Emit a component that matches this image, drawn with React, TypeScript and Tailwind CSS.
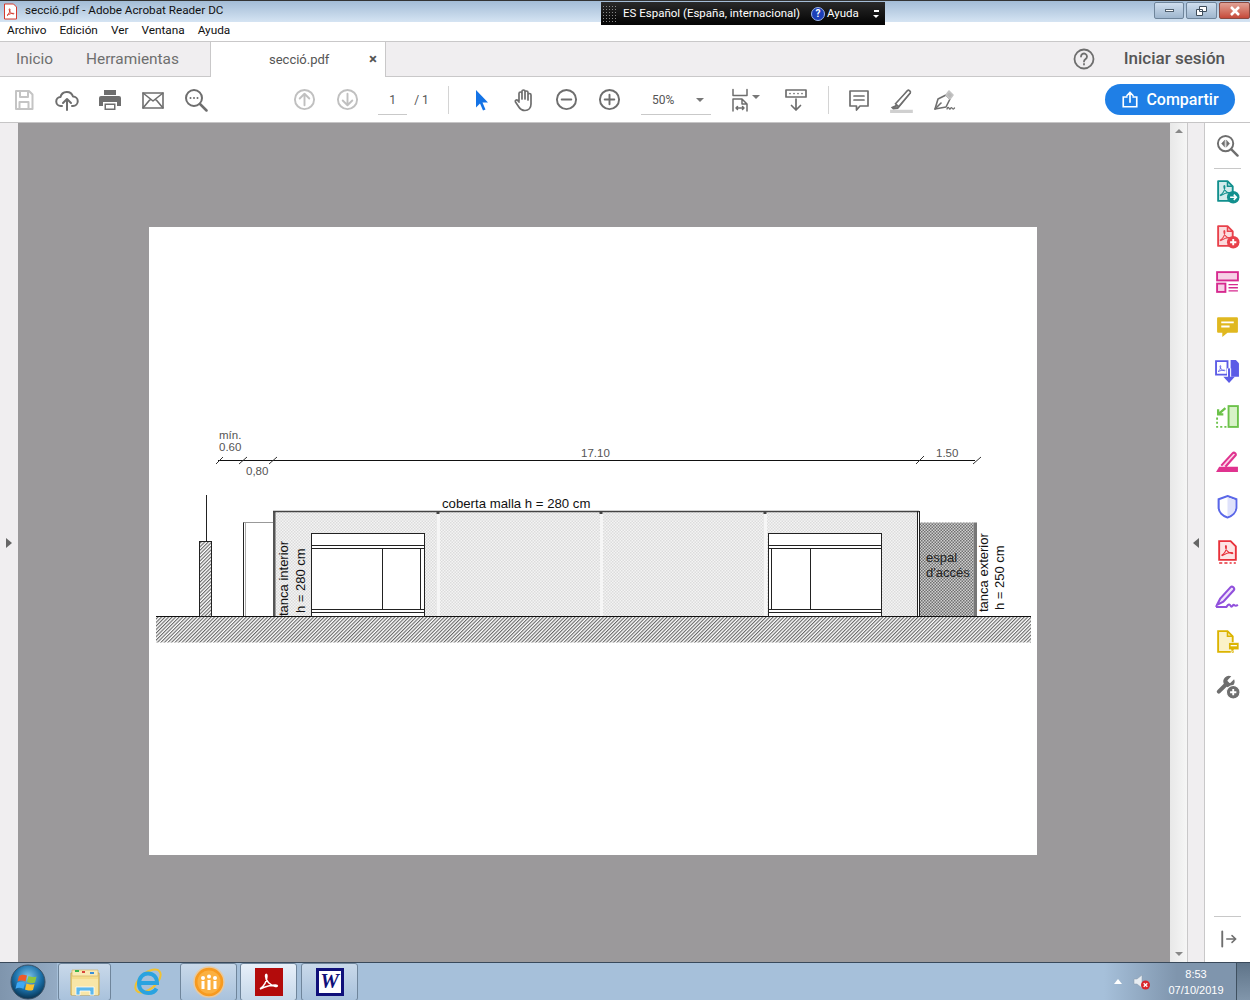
import React from 'react';

const Slot = ({ children, w = 'w-[43px]' }: { children: React.ReactNode; w?: string }) => (
  <div className={`${w} h-[44px] flex items-center justify-center shrink-0`}>{children}</div>
);

const Ico = ({ children, stroke = '#6e6e6e', size = 24, sw = 2 }: { children: React.ReactNode; stroke?: string; size?: number; sw?: number }) => (
  <svg width={size} height={size} viewBox="0 0 24 24" fill="none" stroke={stroke} strokeWidth={sw} strokeLinecap="round" strokeLinejoin="round">
    {children}
  </svg>
);

const Swirl = ({ color }: { color: string }) => (
  <path d="M5 15.500c2.500-1.500 4.500-5 4.500-8 0-1.500-1-1.500-1 0 0 3 3 6 6 6.500 1.500.2 1.500-1 0-1-3 0-6 1-9 3z" fill="none" stroke={color} strokeWidth="1" />
);

const ArrowCircle = ({ stroke, up }: { stroke: string; up: boolean }) => (
  <Ico stroke={stroke} size={23}>
    <circle cx="12" cy="12" r="10" />
    {up ? <path d="M12 18V6.500M7 11l5-5 5 5" /> : <path d="M12 6v11.500M7 13l5 5 5-5" />}
  </Ico>
);

const ZoomCircle = ({ minus }: { minus?: boolean }) => (
  <Ico sw={2} size={23}>
    <circle cx="12" cy="12" r="10" />
    <path d="M7 12h10" />
    {!minus && <path d="M12 7v10" />}
  </Ico>
);

function ToolBar() {
  return (
    <div className="h-[46px] flex items-center pl-[2px] bg-white border-b border-[#c6c5c6] shrink-0">
      <Slot>
        <Ico stroke="#c4c4c4">
          <path d="M4 3h13l3.500 3.500V21H4z" />
          <path d="M8 3v6h8V3M7.500 21v-7h9v7" />
        </Ico>
      </Slot>
      <Slot>
        <Ico>
          <path d="M7 18H6a4.500 4.500 0 0 1-.5-9A6.500 6.500 0 0 1 18 8.500a4.500 4.500 0 0 1 0 9.500h-1" />
          <path d="M12 22V11M8 15l4-4 4 4" />
        </Ico>
      </Slot>
      <Slot>
        <svg width="24" height="24" viewBox="0 0 24 24" fill="#6e6e6e">
          <path d="M6 2h12v5H6z" />
          <path d="M3 8h18a2 2 0 0 1 2 2v8h-4v-4H5v4H1v-8a2 2 0 0 1 2-2z" />
          <path d="M6.500 15.500h11V22h-11zM8 17v3.500h8V17z" fillRule="evenodd" />
        </svg>
      </Slot>
      <Slot>
        <Ico sw={1.6}>
          <rect x="2" y="5" width="20" height="15" />
          <path d="M2 5l10 8 10-8M2 20l7.500-9M22 20l-7.500-9" />
        </Ico>
      </Slot>
      <Slot>
        <Ico>
          <circle cx="10" cy="10" r="8" />
          <path d="M16 16l6.500 6.500" strokeWidth="2.500" />
          <path d="M6.500 10h.01M10 10h.01M13.500 10h.01" />
        </Ico>
      </Slot>
      <div className="w-[66px] shrink-0" />
      <Slot>
        <ArrowCircle stroke="#c0c0c0" up />
      </Slot>
      <Slot>
        <ArrowCircle stroke="#c0c0c0" up={false} />
      </Slot>
      <div className="w-[29px] ml-[9px] h-[30px] pt-[2px] border-b border-[#c9c9c9] flex items-center justify-center text-[12px] text-[#555] shrink-0">1</div>
      <div className="w-[29px] text-[12px] text-[#555] text-center shrink-0 pt-[1px]">/ 1</div>
      <div className="w-[12px] shrink-0" />
      <div className="w-px h-[28px] bg-[#d4d4d4] shrink-0" />
      <div className="w-[10px] shrink-0" />
      <Slot>
        <svg width="24" height="24" viewBox="0 0 24 24" fill="#1473e6">
          <path d="M7 2l12 12.500h-5.500l3 7-2.500 1-3-7L7 19.500z" />
        </svg>
      </Slot>
      <Slot>
        <Ico sw={1.7}>
          <path d="M7 13V5.500a1.500 1.500 0 0 1 3 0V11M10 11V3.500a1.500 1.500 0 0 1 3 0V11M13 11V4.500a1.500 1.500 0 0 1 3 0V12M16 12V7a1.500 1.500 0 0 1 3 0v9c0 4-2.500 6.500-6 6.500s-5-1.500-6.500-4L3.500 14c-.8-1.500 1-2.800 2.200-1.600L7 14" />
        </Ico>
      </Slot>
      <Slot>
        <ZoomCircle minus />
      </Slot>
      <Slot>
        <ZoomCircle />
      </Slot>
      <div className="w-[10px] shrink-0" />
      <div className="w-[70px] h-[30px] pt-[2px] border-b border-[#c9c9c9] flex items-center pl-[11px] shrink-0">
        <span className="text-[12px] text-[#555] flex-1">50%</span>
        <span className="w-0 h-0 border-l-[4px] border-r-[4px] border-t-[4px] border-l-transparent border-r-transparent border-t-[#777] mr-[7px]" />
      </div>
      <div className="w-[18px] shrink-0" />
      <div className="w-[49px] h-[44px] flex items-center shrink-0">
        <Ico sw={1.5} size={24}>
          <path d="M4 1.500v6h14v-6M4 23V11h9l5 5v7M13 11v5h5M7 20h8M7 20l1.500-1.500M7 20l1.500 1.500M15 20l-1.500-1.500M15 20l-1.500 1.500" />
        </Ico>
        <span className="w-0 h-0 border-l-[4px] border-r-[4px] border-t-[4px] border-l-transparent border-r-transparent border-t-[#777] -ml-[1px] mb-[6px]" />
      </div>
      <Slot w="w-[36px]">
        <Ico sw={1.7}>
          <rect x="2" y="2" width="20" height="7" />
          <path d="M6 5.500h.01M10 5.500h.01M14 5.500h.01M18 5.500h.01M12 11v11M7.500 17.500L12 22l4.500-4.500" />
        </Ico>
      </Slot>
      <div className="w-[14px] shrink-0" />
      <div className="w-px h-[28px] bg-[#d4d4d4] shrink-0" />
      <div className="w-[8px] shrink-0" />
      <Slot>
        <Ico sw={1.7}>
          <path d="M3 3h18v15h-8l-3.500 4v-4H3z" />
          <path d="M7 8h10M7 12h10" />
        </Ico>
      </Slot>
      <Slot>
        <svg width="26" height="26" viewBox="0 0 24 24" fill="none">
          <path d="M1 21h21v3H1z" fill="#d0d0d0" />
          <path d="M3 19l3-1.500L17 3.500c1-1.300 3.500.7 2.500 2L8 19.500 4 20z" fill="#8a8a8a" stroke="#6e6e6e" strokeWidth="1.600" />
          <path d="M17 3.500c1-1.300 3.500.7 2.500 2L9 18l-3-2.500z" fill="#fff" stroke="#6e6e6e" strokeWidth="1.400" />
        </svg>
      </Slot>
      <Slot>
        <Ico sw={1.6}>
          <path d="M2 21l3-10 8-4 4 4-4 8z" />
          <path d="M2 21l6-6" />
          <path d="M13 7l3-4 4 4-3 4z" fill="#b8b8b8" stroke="#c4c4c4" />
          <path d="M14 21c1-3 2-1 2.500 0s1.500-2.500 2.500-1 1 1.500 2.500 0" strokeWidth="1.300" />
        </Ico>
      </Slot>
      <div className="w-[139px] shrink-0" />
      <button className="w-[130px] h-[31px] rounded-full bg-[#1f7fe6] text-white flex items-center justify-center gap-[7px] text-[16px] font-medium shrink-0">
        <svg width="18" height="18" viewBox="0 0 24 24" fill="none" stroke="#fff" strokeWidth="2.200" strokeLinecap="round">
          <path d="M8 8H3v13h18V8h-5M12 15V2M8 6l4-4 4 4" />
        </svg>
        Compartir
      </button>
    </div>
  );
}

// plano de la sección, coordenadas de la pantalla
function Drawing() {
  return (
    <svg width="888" height="628" viewBox="149 227 888 628" fontFamily="'Liberation Sans', Arial, sans-serif">
      <defs>
        <pattern id="hatch" width="2.500" height="2.500" patternUnits="userSpaceOnUse" patternTransform="rotate(-45)">
          <rect width="2.500" height="2.500" fill="#fff" />
          <rect width="2.500" height="1.100" fill="#666" />
        </pattern>
        <pattern id="mesh" width="3" height="3" patternUnits="userSpaceOnUse">
          <rect width="3" height="3" fill="#f4f4f4" />
          <rect width="1.500" height="1.500" fill="#dcdcdc" />
          <rect x="1.500" y="1.500" width="1.500" height="1.500" fill="#dcdcdc" />
        </pattern>
        <pattern id="meshDark" width="3" height="3" patternUnits="userSpaceOnUse">
          <rect width="3" height="3" fill="#cfcfcf" />
          <rect width="1.500" height="1.500" fill="#707070" />
          <rect x="1.500" y="1.500" width="1.500" height="1.500" fill="#707070" />
        </pattern>
      </defs>

      <g fill="#555" fontSize="11.500">
        <text x="219" y="439">mín.</text>
        <text x="219" y="451">0.60</text>
        <text x="246" y="475">0,80</text>
        <text x="581" y="457">17.10</text>
        <text x="936" y="457">1.50</text>
      </g>
      <g stroke="#111" strokeWidth="1">
        <path d="M218 460.500H975" />
        <path d="M216 464l7-7M239 464l8-7M269 464l8-7M916 464l8-8M973 464l8-7" stroke="#333" />
      </g>

      <rect x="156" y="617" width="875" height="25.500" fill="url(#hatch)" />
      <path d="M156 616.500H199M212 616.500H1031" stroke="#111" />

      <path d="M206.500 495v46" stroke="#222" />
      <rect x="199.500" y="541.500" width="12" height="75" fill="url(#hatch)" stroke="#222" />

      <path d="M243.500 616V522.500H273" fill="none" stroke="#999" />
      <path d="M243.500 522.500V616" stroke="#222" />
      <path d="M245.500 523V616" stroke="#aaa" />

      <rect x="275" y="512" width="642" height="104" fill="url(#mesh)" />
      <rect x="437" y="512" width="3" height="104" fill="#f6f6f6" />
      <rect x="600" y="512" width="3" height="104" fill="#f6f6f6" />
      <rect x="764" y="512" width="3" height="104" fill="#f6f6f6" />
      <rect x="273" y="511" width="2.500" height="105" fill="#555" />
      <path d="M273 511.500H919" stroke="#444" strokeWidth="1.500" />
      <path d="M436.500 512h3v2h-3zM599.500 512h3v2h-3zM763.500 512h3v2h-3z" fill="#444" />
      <path d="M917.500 511v105M919.500 511v105" stroke="#222" />

      <g fill="#fff" stroke="#222">
        <rect x="311.500" y="533.500" width="113" height="83" />
        <path d="M311.500 545.500H424.500M311.500 548.500H424.500M311.500 609.500H424.500M311.500 612.500H424.500M382.500 548.500V609.500M420.500 548.500V609.500" fill="none" />
        <rect x="768.500" y="533.500" width="113" height="83" />
        <path d="M768.500 545.500H881.500M768.500 548.500H881.500M768.500 609.500H881.500M768.500 612.500H881.500M771.500 548.500V609.500M810.500 548.500V609.500" fill="none" />
      </g>

      <rect x="920" y="522.500" width="54" height="93.500" fill="url(#meshDark)" />
      <rect x="974" y="522.500" width="3" height="93.500" fill="#777" />

      <g fill="#111" fontSize="13">
        <text x="442" y="508" fontSize="13.200">coberta malla h = 280 cm</text>
        <text transform="translate(288 616) rotate(-90)">tanca interior</text>
        <text transform="translate(305 613) rotate(-90)">h = 280 cm</text>
        <text transform="translate(988 612) rotate(-90)">tanca exterior</text>
        <text transform="translate(1004 610) rotate(-90)">h = 250 cm</text>
        <text x="926" y="562" fill="#222">espal</text>
        <text x="926" y="577" fill="#222">d'accés</text>
      </g>
    </svg>
  );
}

const PdfDoc = ({ color, fill }: { color: string; fill: string }) => (
  <>
    <path d="M3 2h9l5 5v14H3z" fill={fill} stroke={color} strokeWidth="1.800" strokeLinejoin="round" />
    <path d="M12 2v5h5" fill="none" stroke={color} strokeWidth="1.500" />
    <Swirl color={color} />
  </>
);

const railIcons: React.ReactNode[] = [
  <>
    <PdfDoc color="#12908e" fill="#d3ecec" />
    <circle cx="17.500" cy="17.500" r="6" fill="#12908e" />
    <path d="M14.500 17.500h6M18 15l2.500 2.500L18 20" stroke="#fff" strokeWidth="1.500" fill="none" />
  </>,
  <>
    <PdfDoc color="#e8414b" fill="#fbdcde" />
    <circle cx="17.500" cy="17.500" r="6" fill="#e8414b" />
    <path d="M14.500 17.500h6M17.500 14.500v6" stroke="#fff" strokeWidth="1.800" />
  </>,
  <>
    <rect x="2" y="3" width="20" height="8" fill="#f7d0e6" stroke="#d6298f" strokeWidth="1.800" />
    <rect x="2" y="14" width="8" height="8" fill="#f7d0e6" stroke="#d6298f" strokeWidth="1.800" />
    <path d="M13 15h9M13 18h9M13 21h9" stroke="#d6298f" strokeWidth="1.300" />
  </>,
  <>
    <path d="M3 3h18a1 1 0 0 1 1 1v13a1 1 0 0 1-1 1h-9l-5 4v-4H3a1 1 0 0 1-1-1V4a1 1 0 0 1 1-1z" fill="#e0b820" />
    <path d="M6 8h12M6 12h8" stroke="#fff" strokeWidth="1.800" />
  </>,
  <>
    <path d="M1 2h11v13H1z" fill="#fff" stroke="#5c5ce6" strokeWidth="1.800" />
    <path d="M15 1h5l3 3v13h-8z" fill="#5c5ce6" />
    <path d="M3 12c1.500-1 2.500-3 2.500-5 0-1-.7-1-.7 0 0 2 2 4 4 4.300 1 .1 1-.7 0-.7-2 0-4 .7-5.800 1.400z" fill="none" stroke="#5c5ce6" strokeWidth="0.800" />
    <path d="M13.500 9v9" stroke="#fff" strokeWidth="4" />
    <path d="M13.500 9v9" stroke="#5c5ce6" strokeWidth="2" />
    <path d="M8 17h11l-5.500 6z" fill="#5c5ce6" />
  </>,
  <>
    <rect x="13" y="2" width="9" height="20" fill="#d8f2c8" stroke="#6cc24a" strokeWidth="1.800" />
    <path d="M2 13v9h9" fill="none" stroke="#6cc24a" strokeWidth="1.800" strokeDasharray="2 2" />
    <path d="M10 4L3 10M3 5v5h5" fill="none" stroke="#6cc24a" strokeWidth="2.200" />
  </>,
  <>
    <path d="M1 22l3-5h18v5z" fill="#e0338f" />
    <path d="M6 16L17 4c1.500-1.500 4 .8 2.600 2.300L10 17" fill="#fbd5e8" stroke="#e0338f" strokeWidth="2" />
  </>,
  <>
    <path d="M12 2l8.500 3v8c0 4.500-4 8-8.500 9.500C7.500 21 3.500 17.500 3.500 13V5z" fill="#fff" stroke="#5a67e8" strokeWidth="2" />
    <path d="M12 3v18.500c4-1.500 7.500-4.500 7.500-8.500V6z" fill="#dfe2fb" />
  </>,
  <>
    <path d="M4 2h11l5 5v13H4z" fill="#fde4e4" stroke="#e8313a" strokeWidth="1.800" />
    <path d="M6.500 15.500c2.500-1.500 4.500-5 4.500-8 0-1.500-1-1.500-1 0 0 3 3 6 6 6.500 1.500.2 1.500-1 0-1-3 0-6 1-9 3z" fill="none" stroke="#e8313a" strokeWidth="1" />
    <path d="M4 23h3M9 23h3M14 23h2M18 23h2" stroke="#e8313a" strokeWidth="1.400" />
  </>,
  <>
    <path d="M2 20l3-6L15 3c1.500-1.500 4.500 1 3 3L8 17z" fill="#efe3fb" stroke="#9150dc" strokeWidth="2" />
    <path d="M1 22h10c2-3 3-3 4-1s2-1 3-1 1 2 4 0" fill="none" stroke="#9150dc" strokeWidth="2" />
  </>,
  <>
    <path d="M3 2h9l5 5v15H3z" fill="#fbf2c8" stroke="#dcb400" strokeWidth="1.800" />
    <path d="M12 2v5h5" fill="none" stroke="#dcb400" strokeWidth="1.500" />
    <path d="M13 13h10v7h-5l-2.500 3v-3H13z" fill="#dcb400" stroke="#fff" strokeWidth="0.600" />
    <path d="M15 16h6" stroke="#fff" strokeWidth="1.200" />
  </>,
  <>
    <g transform="translate(-1 0) scale(0.9)">
      <path d="M14.700 6.300a1 1 0 0 0 0 1.400l1.600 1.600a1 1 0 0 0 1.400 0l3.770-3.770a6 6 0 0 1-7.940 7.940l-6.910 6.910a2.120 2.120 0 0 1-3-3l6.910-6.910a6 6 0 0 1 7.940-7.940l-3.760 3.760z" fill="#6e6e6e" />
    </g>
    <circle cx="17.500" cy="17.500" r="6.500" fill="#6e6e6e" stroke="#fff" strokeWidth="1" />
    <path d="M14.500 17.500h6M17.500 14.500v6" stroke="#fff" strokeWidth="1.800" />
  </>,
];

function ToolRail() {
  return (
    <div className="w-[45px] bg-white flex flex-col items-center shrink-0">
      <div className="h-[45px] flex items-center justify-center">
        <Ico size={23} sw={2}>
          <circle cx="10" cy="10" r="8" />
          <path d="M16 16l6.500 6.500" strokeWidth="2.500" />
          <path d="M9 6.500L5.800 10 9 13.500zM11 6.500l3.200 3.500-3.200 3.500z" fill="#6e6e6e" strokeWidth="0.500" />
        </Ico>
      </div>
      <div className="w-[27px] h-px bg-[#c8c8c8]" />
      {railIcons.map((icon, i) => (
        <div key={i} className="h-[45px] flex items-center justify-center">
          <svg width="25" height="25" viewBox="0 0 24 24">{icon}</svg>
        </div>
      ))}
      <div className="mt-auto w-[27px] h-px bg-[#c8c8c8]" />
      <div className="h-[45px] flex items-center justify-center pl-[3px] pb-[1px]">
        <Ico size={18} sw={2}>
          <path d="M3 2v20" strokeWidth="2.500" />
          <path d="M9 12h12M16 7.500L21 12l-5 4.500" />
        </Ico>
      </div>
    </div>
  );
}

const TaskBtn = ({ children, w = 'w-[55px]', active }: { children: React.ReactNode; w?: string; active?: boolean }) => (
  <div className={`${w} h-[38px] rounded-[3px] border border-[#6f859b] flex items-center justify-center shrink-0 ${active ? 'bg-gradient-to-b from-[#e8f0f9] to-[#c6d8ea]' : 'bg-gradient-to-b from-[#c9d9ea] to-[#a9c2dc]'}`}>
    {children}
  </div>
);

function TaskBar() {
  return (
    <div className="h-[38px] flex items-center border-t border-[#39495a] bg-[#a6c0da] shrink-0 font-['Liberation_Sans',sans-serif]">
      <div className="w-[57px] h-full flex items-center justify-center pr-[2px] bg-gradient-to-r from-[#7f95ad] to-[#94abc4] shrink-0">
        <svg width="36" height="36" viewBox="0 0 36 36">
          <defs>
            <radialGradient id="orb" cx="50%" cy="35%" r="65%">
              <stop offset="0" stopColor="#7fc4ea" />
              <stop offset="0.6" stopColor="#1a6fa8" />
              <stop offset="1" stopColor="#08324f" />
            </radialGradient>
          </defs>
          <circle cx="18" cy="18" r="17" fill="url(#orb)" stroke="#3b5166" />
          <path d="M9 12c3-2 5-1.500 8-.5l-1.500 6c-3-1-5-1.500-8 0z" fill="#ee5a2a" />
          <path d="M18.500 12c3 1 5 1.500 8 .5l-1.500 6c-3 1-5 .5-8-.5z" fill="#8dc63f" />
          <path d="M7 18.800c3-1.500 5-1 8 0l-1.500 6c-3-1-5-1.500-8 0z" fill="#3fa9f5" />
          <path d="M16.500 19.500c3 1 5 1.500 8 .5l-1.500 6c-3 1-5 .5-8-.5z" fill="#fbc02d" />
        </svg>
      </div>
      <div className="w-px" />
      <TaskBtn w="w-[53px]">
        <svg width="32" height="30" viewBox="0 0 32 30">
          <path d="M2 6h28v22H2z" fill="#f5dc8c" stroke="#c9a850" />
          <path d="M3 3h26v6H3z" fill="#f9e9b4" stroke="#d4b565" strokeWidth="0.700" />
          <path d="M6 3h4v2H6z" fill="#3bb54a" />
          <path d="M13 4h3v2h-3z" fill="#d9453a" />
          <path d="M21 5h4v2h-4z" fill="#3a8fd9" />
          <path d="M3 12h26v16H3z" fill="#f8e6a8" />
          <path d="M7 28V20h18v8h-4v-4H11v4z" fill="#5cb8ec" stroke="#fff" strokeWidth="0.800" />
        </svg>
      </TaskBtn>
      <div className="w-[5px] shrink-0" />
      <div className="w-[64px] flex items-center justify-center shrink-0">
        <svg width="34" height="34" viewBox="0 0 34 34" fill="none">
          <ellipse cx="17" cy="16" rx="15" ry="8" transform="rotate(-40 17 16)" stroke="#f2c230" strokeWidth="2" />
          <path d="M8 18h18c0-6-4-9.500-9-9.500S8 12.500 8 18.500s4 9.500 9.500 9.500c4 0 6.500-1.500 8-4.500" stroke="#2aa3e0" strokeWidth="4" />
        </svg>
      </div>
      <TaskBtn w="w-[57px]">
        <svg width="32" height="32" viewBox="0 0 32 32">
          <circle cx="16" cy="16" r="15" fill="#f79a1f" stroke="#e7c9a0" strokeWidth="1.500" />
          <circle cx="16" cy="16" r="11.500" fill="#fbb040" />
          <circle cx="10" cy="12" r="2" fill="#fff" />
          <circle cx="16" cy="10.500" r="2" fill="#fff" />
          <circle cx="22" cy="12" r="2" fill="#fff" />
          <path d="M8.500 15h3v8h-3zM14.500 14h3v10h-3zM20.500 15h3v8h-3z" fill="#fff" />
        </svg>
      </TaskBtn>
      <div className="w-[3px] shrink-0" />
      <TaskBtn w="w-[57px]" active>
        <svg width="28" height="28" viewBox="0 0 28 28">
          <rect width="28" height="28" fill="#b30b0b" />
          <path d="M5 21c4-2.500 7-8 7-13 0-2.500-1.500-2.500-1.500 0 0 5 5 9.500 10 10.500 2.500.3 2.500-1.500 0-1.500-5 0-10 1.500-15.500 4z" fill="none" stroke="#fff" strokeWidth="1.500" />
        </svg>
      </TaskBtn>
      <div className="w-[4px] shrink-0" />
      <TaskBtn w="w-[57px]">
        <div className="w-[28px] h-[28px] border-[3px] border-[#10107a] bg-white flex items-center justify-center">
          <span className="text-[#10107a] text-[21px] font-bold italic font-['Liberation_Serif',serif] leading-none">W</span>
        </div>
      </TaskBtn>
      <div className="flex-1" />
      <div className="w-[146px] h-full bg-gradient-to-r from-[#a6c0da] via-[#7f95ad] to-[#7f95ad] flex items-center shrink-0">
        <div className="w-[12px] ml-[10px]">
          <span className="block w-0 h-0 border-l-[4px] border-r-[4px] border-b-[5px] border-l-transparent border-r-transparent border-b-white" />
        </div>
        <svg className="ml-[7px]" width="18" height="18" viewBox="0 0 18 18">
          <path d="M1 6h3l5-4v13l-5-4H1z" fill="#e8edf2" stroke="#8a9aaa" strokeWidth="0.500" />
          <circle cx="12.500" cy="12" r="4.500" fill="#d9262c" />
          <path d="M10.700 10.200l3.600 3.600M14.300 10.200l-3.600 3.600" stroke="#fff" strokeWidth="1.300" />
        </svg>
        <div className="flex flex-col items-center w-[60px] ml-[15px] text-[11px] leading-[16px] text-white">
          <span>8:53</span>
          <span>07/10/2019</span>
        </div>
        <div className="ml-auto w-[14px] h-full bg-gradient-to-b from-[#5f7489] to-[#8196ab] border-l border-[#3f5060]" />
      </div>
    </div>
  );
}

export default function App() {
  return (
    <div className="relative w-[1250px] h-[1000px] overflow-hidden flex flex-col bg-white font-['Roboto',sans-serif]">
      {/* barra de idioma, flota encima */}
      <div className="absolute left-[601px] top-[2px] w-[284px] h-[23px] bg-gradient-to-b from-[#2a2a2a] to-[#050505] text-white text-[11.500px] flex items-center z-10">
        <div className="w-[14px] h-[18px] ml-[1px] bg-[radial-gradient(#888_1px,transparent_1px)] bg-[length:3px_3px]" />
        <span className="ml-[7px]">ES Español (España, internacional)</span>
        <span className="ml-[11px] w-[14px] h-[14px] rounded-full bg-[#1c3fb8] border border-[#9db4e8] text-[10px] font-bold flex items-center justify-center">?</span>
        <span className="ml-[2px]">Ayuda</span>
        <div className="ml-auto mr-[6px] flex flex-col items-center gap-[3px]">
          <span className="block w-[5px] h-[2px] bg-white" />
          <span className="block w-0 h-0 border-l-[3px] border-r-[3px] border-t-[3px] border-l-transparent border-r-transparent border-t-white" />
        </div>
      </div>

      <div className="h-[22px] border-t border-[#333] bg-gradient-to-b from-[#a3bcd6] to-[#d5e4f3] flex items-center shrink-0">
        <svg className="ml-[4px]" width="13" height="17" viewBox="0 0 13 16">
          <path d="M.5.500h9l3 3v12H.500z" fill="#fff" stroke="#d43a2f" />
          <path d="M3 12c2-1.500 3-4 3-6 0-1-.8-1-.8 0 0 2 2 4 4 4.500 1 .1 1-.7 0-.7-2 0-4 .7-6.200 2.200z" fill="none" stroke="#d43a2f" />
        </svg>
        <span className="ml-[8px] text-[11.700px] text-[#111] mb-[1px]">secció.pdf - Adobe Acrobat Reader DC</span>
        <div className="ml-auto flex items-start self-start gap-[2px] pt-[1px]">
          <div className="w-[30px] h-[17px] rounded-[2px] border border-[#6f859b] bg-gradient-to-b from-[#cfdeee] to-[#9fb6ce] flex items-center justify-center">
            <span className="block w-[9px] h-[3px] bg-white border border-[#51606f]" />
          </div>
          <div className="w-[31px] h-[17px] rounded-[2px] border border-[#6f859b] bg-gradient-to-b from-[#cfdeee] to-[#9fb6ce] flex items-center justify-center">
            <svg width="11" height="10" viewBox="0 0 11 10" fill="none" stroke="#3f4d5b">
              <path d="M3.500.500h7v5h-7zM.500 3.500h6v6h-6z" fill="#fff" />
            </svg>
          </div>
          <div className="w-[31px] h-[17px] rounded-[2px] border border-[#8a4a42] bg-gradient-to-b from-[#e0a195] to-[#c5493a] flex items-center justify-center">
            <svg width="12" height="10" viewBox="0 0 12 10" stroke="#fff" strokeWidth="2.500">
              <path d="M2 1l8 8M10 1L2 9" />
            </svg>
          </div>
        </div>
      </div>

      <div className="h-[19px] flex items-center gap-[13px] pl-[7px] pb-[2px] text-[11.800px] text-[#111] bg-white shrink-0">
        <span>Archivo</span>
        <span>Edición</span>
        <span>Ver</span>
        <span>Ventana</span>
        <span>Ayuda</span>
      </div>

      <div className="h-[36px] flex items-stretch bg-[#f0eef0] border-t border-b border-[#c9c8c9] shrink-0 text-[#6e6e6e]">
        <div className="w-[210px] flex items-center pl-[16px] pt-[1px] gap-[33px] text-[15.400px]">
          <span>Inicio</span>
          <span>Herramientas</span>
        </div>
        <div className="w-[176px] -mb-px bg-white border-l border-r border-[#c9c8c9] flex items-center text-[13px] text-[#555]">
          <span className="ml-[58px]">secció.pdf</span>
          <span className="ml-auto mr-[8px] text-[15px] font-bold leading-none">×</span>
        </div>
        <div className="flex-1 flex items-center justify-end">
          <svg className="mr-[29px]" width="22" height="22" viewBox="0 0 22 22" fill="none" stroke="#6e6e6e" strokeWidth="1.800">
            <circle cx="11" cy="11" r="9.500" />
            <path d="M8 8.500a3 3 0 1 1 4.500 2.600c-1 .6-1.500 1-1.500 2.400M11 16v.5" strokeLinecap="round" />
          </svg>
          <span className="mr-[25px] text-[17px] font-medium text-[#555]">Iniciar sesión</span>
        </div>
      </div>

      <ToolBar />

      <div className="flex-1 min-h-0 flex">
        <div className="w-[18px] bg-[#f0eef0] flex items-center justify-center shrink-0">
          <span className="w-0 h-0 border-t-[5px] border-b-[5px] border-l-[6px] border-t-transparent border-b-transparent border-l-[#666]" />
        </div>
        <div className="flex-1 bg-[#9b999b] pt-[104px] pl-[131px]">
          <div className="w-[888px] h-[628px] bg-white">
            <Drawing />
          </div>
        </div>
        <div className="w-[17px] bg-gradient-to-r from-[#e8e8e8] to-[#f6f6f6] flex flex-col items-center justify-between py-[6px] shrink-0">
          <span className="w-0 h-0 border-l-[4px] border-r-[4px] border-b-[4px] border-l-transparent border-r-transparent border-b-[#888]" />
          <span className="w-0 h-0 border-l-[4px] border-r-[4px] border-t-[4px] border-l-transparent border-r-transparent border-t-[#888]" />
        </div>
        <div className="w-[18px] bg-[#f0eef0] border-l border-r border-[#c9c8c9] flex items-center justify-center shrink-0">
          <span className="w-0 h-0 border-t-[5px] border-b-[5px] border-r-[6px] border-t-transparent border-b-transparent border-r-[#666]" />
        </div>
        <ToolRail />
      </div>

      <TaskBar />
    </div>
  );
}
